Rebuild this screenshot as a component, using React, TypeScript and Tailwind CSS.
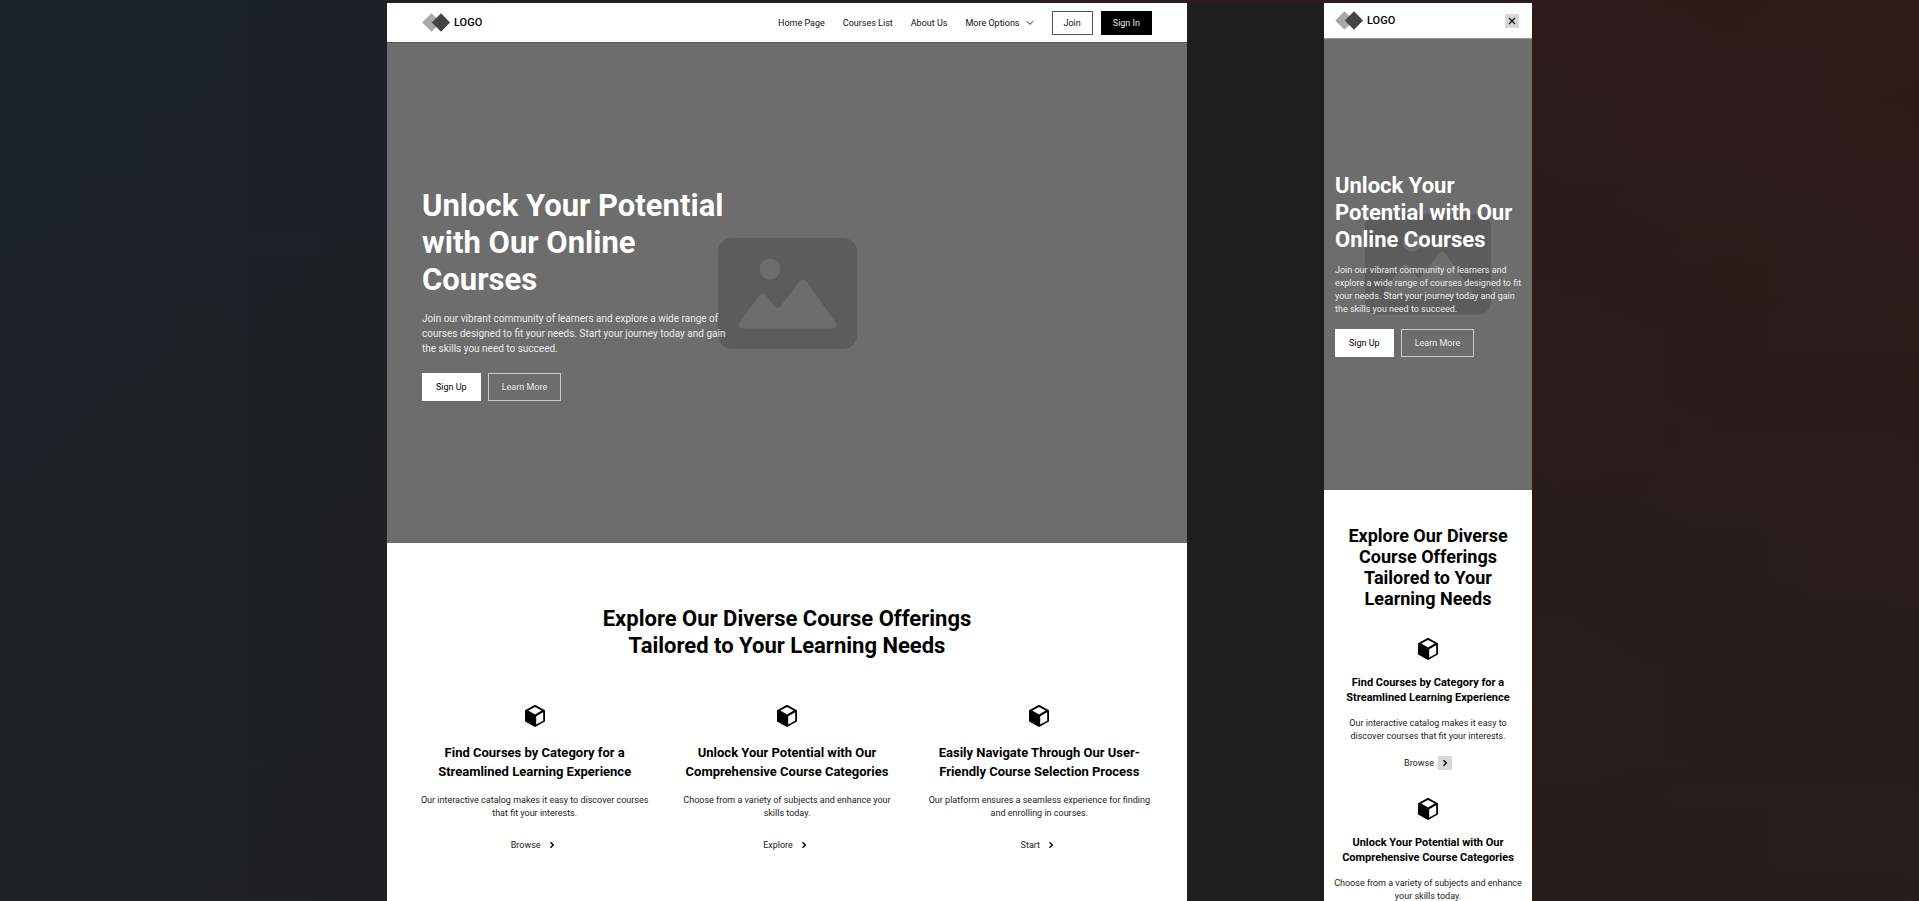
import React from "react";

type Feature = { title: string; text: string; action: string };

const features: Feature[] = [
  {
    title: "Find Courses by Category for a Streamlined Learning Experience",
    text: "Our interactive catalog makes it easy to discover courses that fit your interests.",
    action: "Browse",
  },
  {
    title: "Unlock Your Potential with Our Comprehensive Course Categories",
    text: "Choose from a variety of subjects and enhance your skills today.",
    action: "Explore",
  },
  {
    title: "Easily Navigate Through Our User-Friendly Course Selection Process",
    text: "Our platform ensures a seamless experience for finding and enrolling in courses.",
    action: "Start",
  },
];

const heroTitle = "Unlock Your Potential with Our Online Courses";
const heroText =
  "Join our vibrant community of learners and explore a wide range of courses designed to fit your needs. Start your journey today and gain the skills you need to succeed.";
const sectionTitle = "Explore Our Diverse Course Offerings Tailored to Your Learning Needs";

function Logo() {
  return (
    <a href="#home" className="flex items-center gap-1 text-[11px] leading-none font-medium text-black">
      <svg viewBox="0 0 28 19" className="h-[19px] w-7" aria-hidden="true">
        <path d="M9.5 0.2 18.8 9.5 9.5 18.8 0.2 9.5Z" fill="#a8a8a8" />
        <path d="M19 0.2 28 9.5 19 18.8 9.8 9.5Z" fill="#444444" />
      </svg>
      LOGO
    </a>
  );
}

function Cube() {
  return (
    <svg viewBox="0 0 22 24" className="h-6 w-[22px]" aria-hidden="true">
      <path
        d="M11 2 20 6.8V17L11 22 2 17V6.8Z"
        fill="#000"
        stroke="#000"
        strokeWidth="2"
        strokeLinejoin="round"
      />
      <path d="M11 2.9 17.7 6.6 11 10.4 4.3 6.6Z" fill="#fff" />
      <path d="M19.2 8.3V16.7L12.2 20.6V12.3Z" fill="#fff" />
    </svg>
  );
}

function Chevron() {
  return (
    <svg viewBox="0 0 6 8" className="h-2 w-1.5" fill="none" stroke="#000" strokeWidth="1.4" aria-hidden="true">
      <path d="M1.5 1.2 4.3 4 1.5 6.8" />
    </svg>
  );
}

function Placeholder({ className }: { className: string }) {
  return (
    <svg viewBox="0 0 139 111" className={className} aria-hidden="true">
      <rect width="139" height="111" rx="14" fill="#5c5c5c" />
      <circle cx="52" cy="31" r="10.5" fill="#6d6d6d" />
      <path
        d="M21.8 83.5 41.5 57.2Q44.5 53.5 47.5 57.2L56.5 68.3Q59.5 71.8 62.5 68.3L81.5 43.6Q85 39.2 88.5 43.6L117 83.5Q120.5 90.2 113.5 90.5H25Q18.5 90 21.8 83.5Z"
        fill="#6d6d6d"
      />
    </svg>
  );
}

function HeroButtons() {
  return (
    <div className="flex gap-[7px] text-[9px] leading-[14px]">
      <button type="button" className="border border-white bg-white px-[13px] py-1.5 text-black">
        Sign Up
      </button>
      <button type="button" className="border border-[#c8c8c8] px-[13px] py-1.5 text-[#e8e8e8]">
        Learn More
      </button>
    </div>
  );
}

function DesktopPage() {
  return (
    <div className="col-start-2 bg-white">
      <header className="flex h-10 items-center justify-between border-b border-[#555] px-[35px]">
        <Logo />
        <nav className="flex items-center gap-[18px] text-[9px] leading-[14px] text-[#111]">
          <a href="#home">Home Page</a>
          <a href="#courses">Courses List</a>
          <a href="#about">About Us</a>
          <button type="button" className="flex items-center gap-1.5">
            More Options
            <svg viewBox="0 0 8 6" className="h-1.5 w-2" fill="none" stroke="#222" aria-hidden="true">
              <path d="M0.8 1.2 4 4.4 7.2 1.2" />
            </svg>
          </button>
          <div className="flex gap-2">
            <button type="button" className="border border-[#555] px-[11px] py-1">
              Join
            </button>
            <button type="button" className="border border-black bg-black px-[11px] py-1 text-[#e8e8e8]">
              Sign In
            </button>
          </div>
        </nav>
      </header>
      <section className="relative flex h-[500px] items-center bg-[#6d6d6d] px-[35px] pt-0.5">
        <div className="absolute inset-0 flex items-center justify-center">
          <Placeholder className="w-[139px]" />
        </div>
        <div className="relative flex w-[311px] flex-col gap-[13px]">
          <h1 className="text-[31px] leading-[37px] font-bold text-white">{heroTitle}</h1>
          <p className="text-[10px] leading-[15px] text-[#ececec]">{heroText}</p>
          <div className="pt-1">
            <HeroButtons />
          </div>
        </div>
      </section>
      <section className="px-[35px] py-[62px]">
        <h2 className="mx-auto w-[427px] text-center text-[22px] leading-[27px] font-bold text-black">
          {sectionTitle}
        </h2>
        <div className="mt-[45px] grid grid-cols-3 gap-[27px]">
          {features.map((f) => (
            <article key={f.title} className="flex flex-col items-center text-center">
              <Cube />
              <h3 className="mt-[15px] text-[13px] leading-[19px] font-bold text-black">{f.title}</h3>
              <p className="-mx-0.5 mt-[13px] text-[9px] leading-[13px] text-[#222]">{f.text}</p>
              <a href="#courses" className="mt-[18px] flex items-center gap-1 text-[9px] leading-[14px] text-[#222]">
                {f.action}
                <span className="flex h-3.5 w-3.5 items-center justify-center">
                  <Chevron />
                </span>
              </a>
            </article>
          ))}
        </div>
      </section>
    </div>
  );
}

function PhonePage() {
  return (
    <div className="col-start-4 bg-white">
      <header className="flex h-9 items-center justify-between border-b border-[#999] pr-[13px] pl-[11px]">
        <Logo />
        <button type="button" aria-label="Close menu" className="flex h-3.5 w-3.5 items-center justify-center bg-[#d9d8d3]">
          <svg viewBox="0 0 8 8" className="h-2 w-2" stroke="#000" strokeWidth="1.3" aria-hidden="true">
            <path d="M1 1 7 7M7 1 1 7" />
          </svg>
        </button>
      </header>
      <section className="relative flex h-[451px] items-center bg-[#6d6d6d] pr-1 pl-[11px]">
        <div className="absolute inset-0 flex items-center justify-center">
          <Placeholder className="w-[126px]" />
        </div>
        <div className="relative flex flex-col gap-[11px]">
          <h1 className="text-[22px] leading-[27px] font-bold text-white">{heroTitle}</h1>
          <p className="text-[9px] leading-[13px] text-[#ececec]">{heroText}</p>
          <div className="pt-0.5">
            <HeroButtons />
          </div>
        </div>
      </section>
      <section className="px-2 py-[35px]">
        <h2 className="px-3 text-center text-[18px] leading-[21px] font-bold text-black">{sectionTitle}</h2>
        <div className="mt-7 flex flex-col gap-[27px]">
          {features.map((f) => (
            <article key={f.title} className="flex flex-col items-center text-center">
              <Cube />
              <h3 className="mt-3.5 text-[11px] leading-[15px] font-bold text-black">{f.title}</h3>
              <p className="mt-3 text-[9px] leading-[13px] text-[#222]">{f.text}</p>
              <a href="#courses" className="mt-[13px] flex items-center gap-1 text-[9px] leading-[14px] text-[#222]">
                {f.action}
                <span className="flex h-3.5 w-3.5 items-center justify-center bg-[#d9d8d3]">
                  <Chevron />
                </span>
              </a>
            </article>
          ))}
        </div>
      </section>
    </div>
  );
}

export default function App() {
  return (
    <main className="h-screen overflow-hidden bg-[linear-gradient(180deg,transparent_0%,rgba(31,33,28,0.45)_100%),linear-gradient(90deg,#1b222a_0%,#1c2128_20%,#2b1c1b_62%,#2e1b1a_100%)] font-[Roboto,sans-serif]">
      <div className="grid grid-cols-[387fr_800fr_137fr_208fr_387fr] pt-[3px]">
        <DesktopPage />
        <div className="col-start-3 row-start-1 bg-[#1e1e1e]" />
        <PhonePage />
      </div>
    </main>
  );
}
